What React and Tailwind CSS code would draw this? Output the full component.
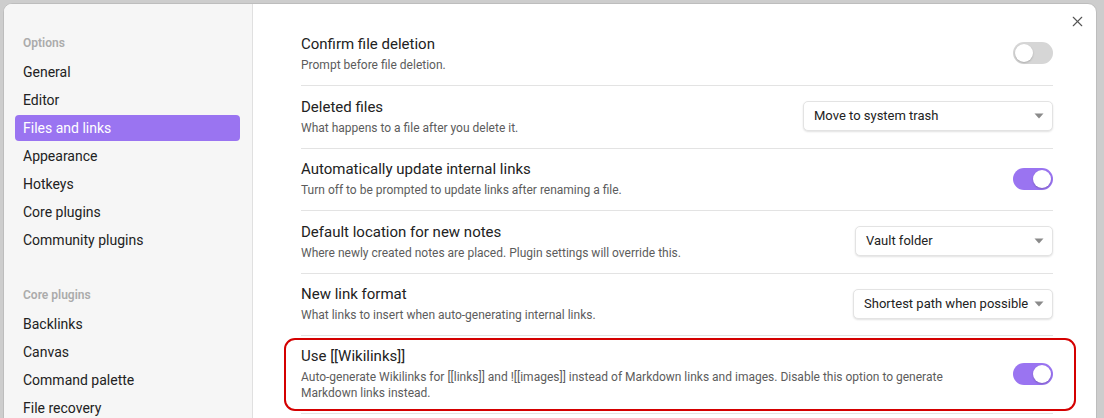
import React from "react";
import { X } from "lucide-react";

const optionItems = ["General", "Editor", "Files and links", "Appearance", "Hotkeys", "Core plugins", "Community plugins"];
const pluginItems = ["Backlinks", "Canvas", "Command palette", "File recovery"];

const Toggle = ({ on }) => (
  <div
    className={`flex h-[22px] w-[40px] shrink-0 items-center rounded-full px-[2px] ${
      on ? "justify-end bg-[#9a74f1]" : "justify-start bg-[#d6d6d6]"
    }`}
  >
    <div className="h-[18px] w-[18px] rounded-full bg-white shadow-[0_1px_2px_rgba(0,0,0,0.2)]" />
  </div>
);

const Dropdown = ({ value, width }) => (
  <div
    className={`flex h-[30px] shrink-0 items-center justify-between rounded-[5px] border border-[#e3e3e3] bg-white pl-[10px] pr-[8px] text-[13px] text-[#222] shadow-[0_1px_2px_rgba(0,0,0,0.12)] ${width}`}
  >
    <span className="whitespace-nowrap">{value}</span>
    <svg width="10" height="6" viewBox="0 0 10 6" className="ml-[6px] shrink-0">
      <path d="M0.5 0.5 L9.5 0.5 L5 5.5 Z" fill="#8a8a8a" />
    </svg>
  </div>
);

const SettingRow = ({ title, desc, control, first, height, children }) => (
  <div
    className={`relative flex items-center justify-between gap-6 pb-[12px] pt-[10px] ${height} ${
      first ? "" : "border-t border-[#e3e3e3]"
    }`}
  >
    <div className="flex flex-col">
      <div className="text-[15px] leading-[20px] text-[#222]">{title}</div>
      <div className="mt-[3px] text-[12px] leading-[16px] text-[#5c5c5c]">{desc}</div>
    </div>
    {control}
    {children}
  </div>
);

const NavItem = ({ label, active }) => (
  <div
    className={`flex h-[26px] items-center rounded-[4px] px-[8px] text-[14px] ${
      active ? "bg-[#9a74f1] text-white" : "text-[#222]"
    }`}
  >
    {label}
  </div>
);

export default function App() {
  return (
    <div
      className="h-[418px] w-[1104px] overflow-hidden bg-[#cdcdcd] pl-[3px] pt-[3px]"
      style={{ fontFamily: "Roboto, 'Liberation Sans', sans-serif" }}
    >
      <div className="flex h-[430px] w-[1094px] overflow-hidden rounded-t-[9px] border border-[#bdbdbd] bg-white">
        {/* Sidebar */}
        <div className="flex w-[249px] shrink-0 flex-col border-r border-[#e0e0e0] bg-[#f6f6f6] pl-[11px] pr-[12px] pt-[29px]">
          <div className="px-[8px] pb-[6px] text-[12px] font-semibold leading-[20px] text-[#ababab]">Options</div>
          <div className="flex flex-col gap-[2px]">
            {optionItems.map((item) => (
              <NavItem key={item} label={item} active={item === "Files and links"} />
            ))}
          </div>
          <div className="mt-[32px] px-[8px] pb-[6px] text-[12px] font-semibold leading-[20px] text-[#ababab]">
            Core plugins
          </div>
          <div className="flex flex-col gap-[2px]">
            {pluginItems.map((item) => (
              <NavItem key={item} label={item} />
            ))}
          </div>
        </div>

        {/* Content */}
        <div className="relative flex-1 pl-[48px] pr-[43px] pt-[19px]">
          <button className="absolute right-[10px] top-[9px] text-[#555]">
            <X className="h-[17px] w-[17px]" strokeWidth={1.6} />
          </button>
          <div className="flex flex-col">
            <SettingRow
              first
              height="min-h-[62px]"
              title="Confirm file deletion"
              desc="Prompt before file deletion."
              control={<Toggle />}
            />
            <SettingRow
              height="min-h-[63px]"
              title="Deleted files"
              desc="What happens to a file after you delete it."
              control={<Dropdown value="Move to system trash" width="w-[250px]" />}
            />
            <SettingRow
              height="min-h-[62px]"
              title="Automatically update internal links"
              desc="Turn off to be prompted to update links after renaming a file."
              control={<Toggle on />}
            />
            <SettingRow
              height="min-h-[63px]"
              title="Default location for new notes"
              desc="Where newly created notes are placed. Plugin settings will override this."
              control={<Dropdown value="Vault folder" width="w-[198px]" />}
            />
            <SettingRow
              height="min-h-[62px]"
              title="New link format"
              desc="What links to insert when auto-generating internal links."
              control={<Dropdown value="Shortest path when possible" width="w-[200px]" />}
            />
            <SettingRow
              height="min-h-[62px]"
              title="Use [[Wikilinks]]"
              desc={
                <>
                  Auto-generate Wikilinks for [[links]] and ![[images]] instead of Markdown links and images. Disable this option to generate
                  <br />
                  Markdown links instead.
                </>
              }
              control={<Toggle on />}
            >
              <div className="pointer-events-none absolute -left-[17px] -right-[23px] bottom-[2px] top-[2px] rounded-[11px] border-2 border-[#d40000]" />
            </SettingRow>
            <div className="border-t border-[#e3e3e3]" />
          </div>
        </div>
      </div>
    </div>
  );
}
